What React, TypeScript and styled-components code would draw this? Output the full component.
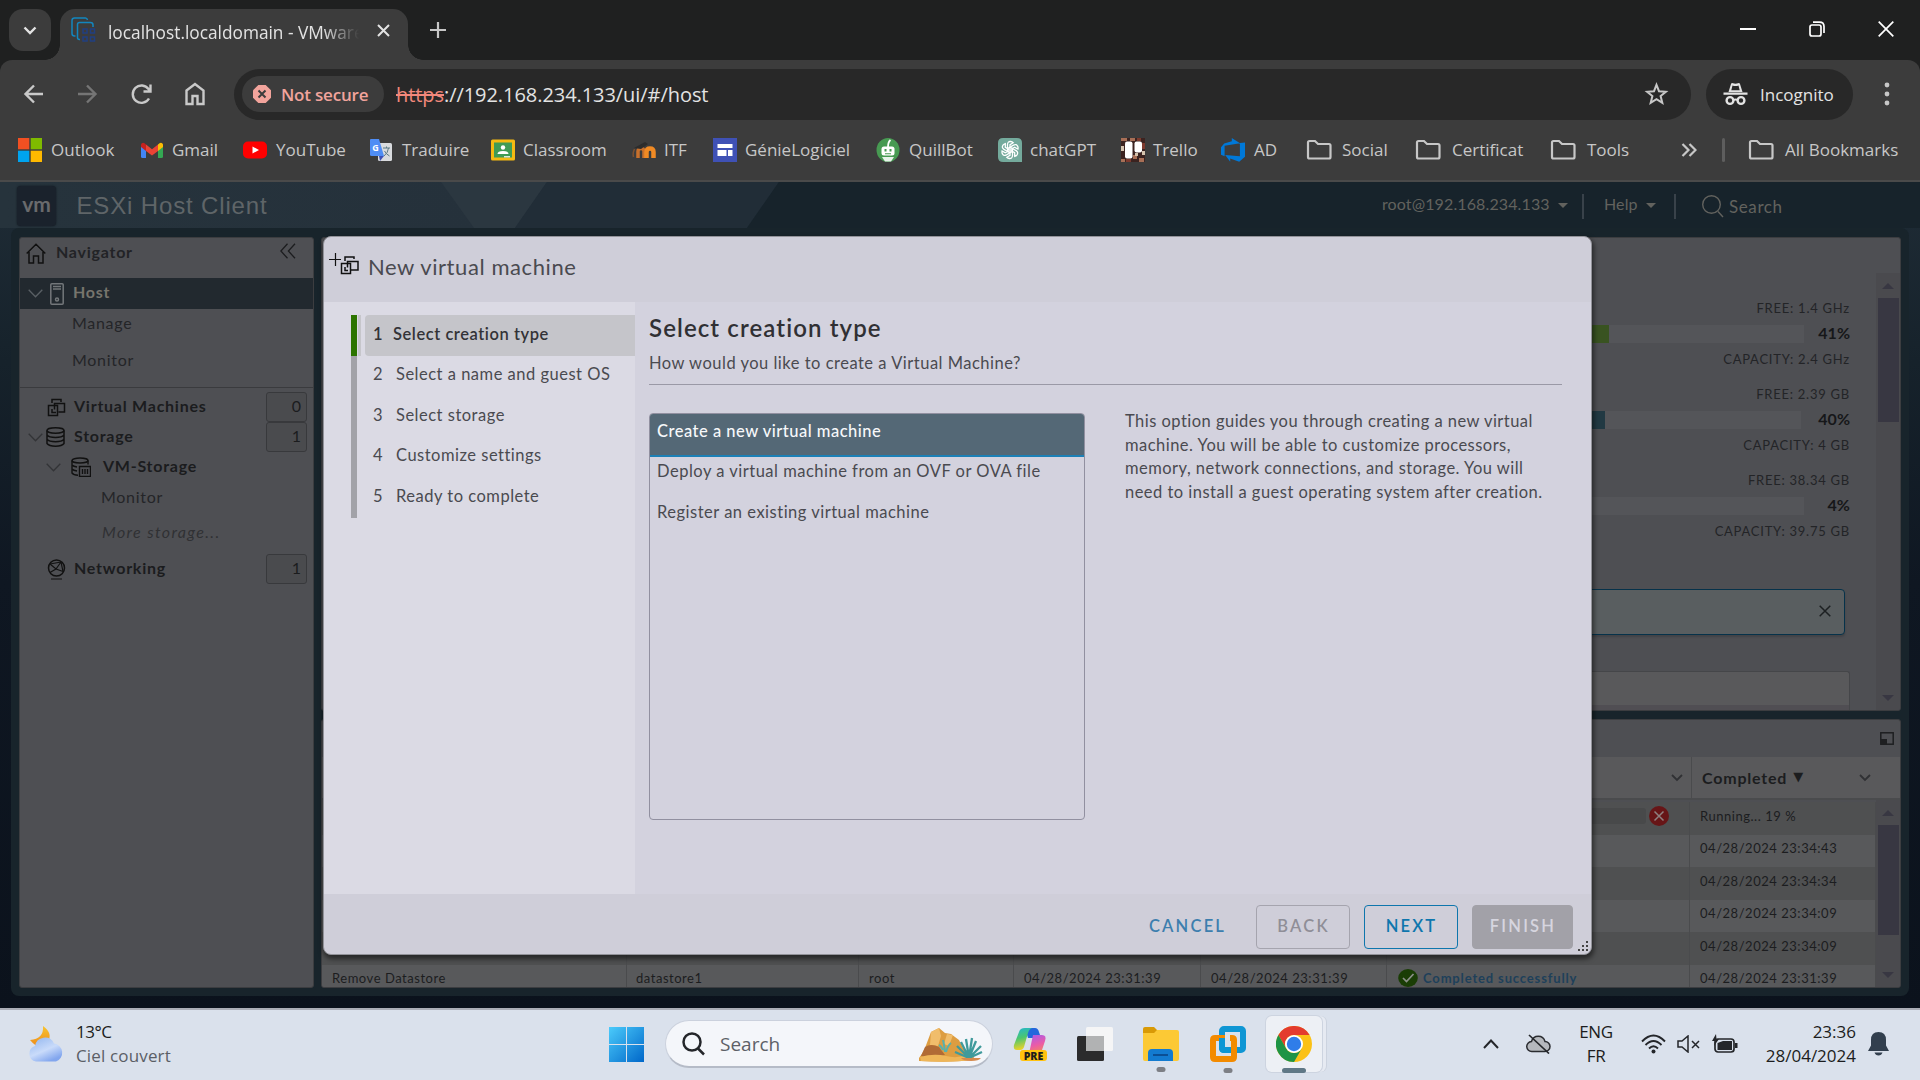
import React from 'react';
import styled, { createGlobalStyle } from 'styled-components';

const clarity = '"Lato", "Open Sans", sans-serif';
const segoe = '"Open Sans", "Noto Sans", sans-serif';

const GlobalStyle = createGlobalStyle`
  * { box-sizing: border-box; }
  html, body { margin: 0; padding: 0; background: #0b121c; overflow: hidden; }
  svg { display: block; flex: none; }
`;

const Screen = styled.div`
  position: relative;
  width: 1920px;
  height: 1080px;
  display: flex;
  flex-direction: column;
  overflow: hidden;
  white-space: nowrap;
  font-family: ${segoe};
`;

/* ---------- Browser chrome ---------- */
const TabStrip = styled.div`
  height: 60px;
  flex: none;
  display: flex;
  align-items: flex-start;
  padding: 9px 0 0 9px;
  background: #1f2020;
`;
const TabSearch = styled.div`
  width: 42px;
  height: 42px;
  border-radius: 14px;
  background: #3c3c3c;
  display: grid;
  place-items: center;
  margin-right: 9px;
`;
const Tab = styled.div`
  position: relative;
  width: 348px;
  height: 51px;
  padding: 0 14px 9px 11px;
  border-radius: 15px 15px 0 0;
  background: #3c3c3c;
  display: flex;
  align-items: center;
  color: #e3e3e3;
  font-size: 17.3px;
  &::before, &::after {
    content: '';
    position: absolute;
    bottom: 0;
    width: 15px;
    height: 15px;
  }
  &::before { left: -15px; background: radial-gradient(circle at 0 0, transparent 14.5px, #3c3c3c 15px); }
  &::after { right: -15px; background: radial-gradient(circle at 100% 0, transparent 14.5px, #3c3c3c 15px); }
`;
const TabTitle = styled.span`
  width: 252px;
  margin: 0 17px 0 11px;
  padding-top: 4px;
  overflow: hidden;
  mask-image: linear-gradient(90deg, #000 215px, transparent 251px);
`;
const NewTab = styled.div`
  margin: 13px 0 0 22px;
`;
const WindowButtons = styled.div`
  margin-left: auto;
  display: flex;
  align-items: center;
  gap: 53px;
  padding: 12px 26px 0 0;
`;

const ToolbarBack = styled.div`
  background: #1f2020;
  flex: none;
`;
const Toolbar = styled.div`
  height: 68px;
  display: flex;
  align-items: center;
  padding: 0 30px 0 21px;
  background: #3c3c3c;
  border-radius: 12px 12px 0 0;
`;
const NavIcon = styled.div<{ $w: number }>`
  width: ${(p) => p.$w}px;
`;
const Omnibox = styled.div`
  width: 1457px;
  height: 51px;
  border-radius: 26px;
  background: #282828;
  display: flex;
  align-items: center;
  padding: 0 22px 0 8px;
  color: #e3e3e3;
  font-size: 20px;
  letter-spacing: -0.06px;
`;
const Insecure = styled.div`
  width: 142px;
  height: 36px;
  border-radius: 18px;
  background: #3c3c3c;
  color: #f2a49c;
  display: flex;
  align-items: center;
  gap: 10px;
  padding: 0 0 0 11px;
  font-size: 17px;
  font-weight: 600;
  letter-spacing: -0.2px;
  margin-right: 12px;
`;
const Scheme = styled.s`
  color: #f2887c;
`;
const Url = styled.span`
  margin-right: auto;
`;
const Incognito = styled.div`
  width: 147px;
  height: 51px;
  margin-left: 15px;
  border-radius: 26px;
  background: #282828;
  display: flex;
  align-items: center;
  gap: 12px;
  padding-left: 17px;
  color: #e3e3e3;
  font-size: 17px;
`;
const Kebab = styled.div`
  margin-left: auto;
`;

const Bookmarks = styled.div`
  height: 54px;
  flex: none;
  display: flex;
  align-items: center;
  padding: 0 0 9px 18px;
  background: #3c3c3c;
  border-bottom: 2px solid #4a4a4a;
  color: #c7c7c7;
  font-size: 17px;
`;
const Bookmark = styled.div<{ $w: number; $gap?: number }>`
  width: ${(p) => p.$w}px;
  flex: none;
  display: flex;
  align-items: center;
  gap: ${(p) => p.$gap ?? 9}px;
`;
const BookmarkRule = styled.div`
  width: 3px;
  height: 24px;
  border-radius: 2px;
  background: #5e5e5e;
  margin-right: 23px;
`;

/* ---------- Host client ---------- */
const Client = styled.div`
  height: 826px;
  flex: none;
  display: flex;
  flex-direction: column;
  background: linear-gradient(#1f2c36 0, #16222b 180px, #0f1722 400px, #0b121c 826px);
  font-family: ${clarity};
`;
const Banner = styled.header`
  position: relative;
  height: 46px;
  flex: none;
  display: flex;
  align-items: center;
  padding: 2px 0 0 17px;
  background: linear-gradient(90deg, #26333c 0, #25313b 500px, #17232b 900px, #17232b);
  color: #62625e;
  font-size: 16px;
`;
const BannerArt = styled.svg`
  position: absolute;
  inset: 0;
`;
const VmLogo = styled.div`
  position: relative;
  width: 39px;
  height: 40px;
  border-radius: 4px;
  background: #1a222c;
  color: #696a6c;
  font: bold 21px/36px ${clarity};
  text-align: center;
  box-shadow: 0 0 2px #0e151c;
`;
const Product = styled.div`
  position: relative;
  margin-left: 20.500px;
  padding-bottom: 1px;
  color: #5f6568;
  font: 24px "Liberation Sans", Arial, sans-serif;
  letter-spacing: 0.85px;
  flex: 1;
`;
const BannerItem = styled.div<{ $w: number }>`
  width: ${(p) => p.$w}px;
  height: 25px;
  display: flex;
  align-items: center;
  gap: 8px;
  padding-bottom: 6px;
  letter-spacing: 0.12px;
`;
const BannerRule = styled.div<{ $gap: number }>`
  width: 2px;
  height: 25px;
  margin-right: ${(p) => p.$gap}px;
  background: #39424a;
`;
const Caret = styled.i`
  border: 5px solid transparent;
  border-top-color: #62625e;
  border-bottom: 0;
  margin-top: 4px;
`;
const SearchItem = styled.div`
  width: 218px;
  display: flex;
  align-items: center;
  gap: 5px;
  font-size: 17px;
  letter-spacing: 0.6px;
`;

const Frame = styled.div`
  width: 1898px;
  height: 768px;
  margin-left: 11px;
  padding: 9px 8px 8px;
  border-radius: 8px;
  background: #18242b;
  display: flex;
  gap: 7px;
`;
const Panel = styled.section`
  background: #4e4f53;
  border: 1px solid #3c3d40;
  border-radius: 3px;
  overflow: hidden;
`;
const Navigator = styled(Panel)`
  width: 295px;
  display: flex;
  flex-direction: column;
  color: #18191b;
  font-size: 16px;
`;
const NavHeader = styled.div`
  height: 40px;
  display: flex;
  align-items: flex-start;
  padding: 5px 17px 0 6px;
  font-weight: 700;
  color: #222326;
  letter-spacing: 0.75px;
`;
const NavTitle = styled.span`
  flex: 1;
  margin: -1px 0 0 10px;
`;
const NavRow = styled.div<{ $h: number; $pl: number; $kind?: 'host' | 'bold' | 'more' }>`
  height: ${(p) => p.$h}px;
  display: flex;
  align-items: center;
  padding: 0 6px 0 ${(p) => p.$pl}px;
  letter-spacing: ${(p) => (p.$kind === 'more' ? 1.35 : p.$kind ? 0.75 : 0.7)}px;
  font-weight: ${(p) => (p.$kind === 'host' || p.$kind === 'bold' ? 700 : 400)};
  font-style: ${(p) => (p.$kind === 'more' ? 'italic' : 'normal')};
  color: ${(p) => (p.$kind === 'host' ? '#77756d' : p.$kind === 'more' ? '#303134' : p.$kind === 'bold' ? '#1b1c1e' : '#242528')};
  background: ${(p) => (p.$kind === 'host' ? '#22292f' : 'transparent')};
`;
const NavLabel = styled.span<{ $ml?: number }>`
  flex: 1;
  margin-left: ${(p) => p.$ml ?? 0}px;
  padding-bottom: 4px;
`;
const Twisty = styled.div<{ $mr: number }>`
  margin-right: ${(p) => p.$mr}px;
`;
const NavDivider = styled.div`
  height: 1px;
  margin: 4px 0;
  background: #3a3b3e;
`;
const Count = styled.span`
  width: 41px;
  height: 30px;
  padding: 0 5px 3px 0;
  border: 1px solid #38393c;
  border-radius: 3px;
  background: #4a4b4e;
  font-weight: 400;
  line-height: 25px;
  text-align: right;
  letter-spacing: 0;
`;

const Work = styled.div`
  width: 1580px;
  display: flex;
  flex-direction: column;
  gap: 8px;
`;
const HostPanel = styled(Panel)`
  height: 474px;
  display: flex;
  justify-content: flex-end;
`;
const Stats = styled.div`
  width: 290px;
  padding: 59px 26px 0 0;
  display: flex;
  flex-direction: column;
`;
const Stat = styled.div`
  height: 86px;
  display: flex;
  flex-direction: column;
  align-items: flex-end;
  color: #232427;
  font-size: 13px;
  letter-spacing: 0.75px;
  line-height: 22px;
`;
const StatMeter = styled.div`
  width: 100%;
  height: 29px;
  display: flex;
  align-items: center;
  justify-content: flex-end;
`;
const Track = styled.div<{ $fill: number; $color: string }>`
  flex: 1;
  height: 18px;
  background: linear-gradient(90deg, ${(p) => p.$color} ${(p) => p.$fill}px, #545559 ${(p) => p.$fill}px);
`;
const Percent = styled.b<{ $w: number }>`
  width: ${(p) => p.$w}px;
  text-align: right;
  font-size: 16px;
  letter-spacing: 0;
  color: #161719;
  padding-bottom: 2px;
`;
const Notice = styled.div`
  height: 46px;
  margin: 34px 5px 0 0;
  flex: none;
  border: 1.5px solid #06324a;
  border-radius: 4px;
  background: #595e60;
  box-shadow: 0 2px 2px #424347;
  display: flex;
  align-items: center;
  justify-content: flex-end;
  padding: 0 13px 3px 0;
`;
const Card = styled.div`
  flex: 1;
  margin-top: 36px;
  border: 1px solid #454649;
  border-bottom: 0;
  border-radius: 3px 3px 0 0;
  background: linear-gradient(#59595b 33px, #504e53 33px);
`;
const Scrollbar = styled.div<{ $top: number }>`
  width: 24px;
  margin-top: ${(p) => p.$top}px;
  background: #4a4a4e;
  display: flex;
  flex-direction: column;
  align-items: center;
  padding: 10px 0 9px;
`;
const Thumb = styled.div<{ $h: number }>`
  width: 21px;
  height: ${(p) => p.$h}px;
  margin: 9px 0 auto;
  background: #383742;
`;
const Arrow = styled.i<{ $down?: boolean }>`
  border: 6px solid transparent;
  ${(p) => (p.$down ? 'border-top-color: #383742; border-bottom: 0;' : 'border-bottom-color: #383742; border-top: 0;')}
`;

const Tasks = styled(Panel)`
  height: 269px;
  display: flex;
  flex-direction: column;
  color: #1c1d1f;
`;
const TasksBar = styled.div`
  height: 37px;
  flex: none;
  display: flex;
  justify-content: flex-end;
  align-items: center;
  padding: 0 6px 1px 0;
`;
const TasksHead = styled.div`
  height: 43px;
  flex: none;
  display: flex;
  justify-content: flex-end;
  align-items: center;
  background: #59595b;
  border-bottom: 2px solid #4a4b4d;
  font-size: 16px;
  font-weight: 700;
  letter-spacing: 0.8px;
`;
const SortHead = styled.div`
  width: 209px;
  height: 41px;
  margin-left: 8px;
  padding: 0 29px 0 10px;
  border-left: 1px solid #4a4b4d;
  display: flex;
  align-items: center;
`;
const SortMark = styled.span`
  font: 13px "DejaVu Sans", sans-serif;
  margin: 0 auto 2px 6px;
`;
const TasksBody = styled.div`
  flex: 1;
  min-height: 0;
  display: flex;
`;
const TaskRows = styled.div`
  width: 1554px;
  padding-top: 2px;
`;
const TaskRow = styled.div<{ $odd?: boolean }>`
  height: 32.5px;
  display: grid;
  grid-template-columns: 305px 232px 155px 187px 186px 303px 186px;
  background: ${(p) => (p.$odd ? '#4f5051' : '#58595b')};
  font-size: 13px;
  letter-spacing: 0.53px;
`;
const Cell = styled.div<{ $pad?: number }>`
  border-right: 1px solid #4a4b4d;
  display: flex;
  align-items: center;
  padding: 0 0 5px ${(p) => p.$pad ?? 10}px;
`;
const RunningCell = styled(Cell)`
  justify-content: flex-end;
  padding-right: 20px;
  padding-bottom: 4px;
`;
const RunTrack = styled.div`
  width: 240px;
  height: 16px;
  margin-right: 3px;
  border-radius: 3px;
  background: #48494a;
`;
const Success = styled.b`
  margin-left: 5px;
  letter-spacing: 0.85px;
  color: #1e405a;
`;

/* ---------- Dialog ---------- */
const Dialog = styled.div`
  position: absolute;
  left: 323px;
  top: 236px;
  width: 1269px;
  height: 719px;
  border: 1px solid #929299;
  border-radius: 8px;
  background: #cfced9;
  box-shadow: 1px 3px 5px 1px rgba(0, 0, 0, 0.5);
  overflow: hidden;
  display: flex;
  flex-direction: column;
  font-family: ${clarity};
  color: #4a4a50;
  font-size: 16.5px;
  letter-spacing: 0.5px;
`;
const DialogHead = styled.div`
  height: 65px;
  flex: none;
  display: flex;
  align-items: flex-start;
  padding: 15px 0 0 5px;
  font-size: 22px;
  letter-spacing: 0.58px;
`;
const DialogTitle = styled.span`
  margin: 1px 0 0 8px;
`;
const DialogBody = styled.div`
  height: 592px;
  flex: none;
  display: flex;
  background: #d3d2de;
`;
const Steps = styled.div`
  width: 311px;
  padding: 13px 0 0 27px;
  background: #dbdae4;
`;
const Step = styled.div<{ $active?: boolean }>`
  height: 40.5px;
  display: flex;
  border-left: 6px solid ${(p) => (p.$active ? '#2c7400' : '#a2a2a8')};
  ${(p) => p.$active && 'font-weight: 600; letter-spacing: 0.55px; color: #333337;'}
`;
const StepSliver = styled.div`
  width: 3px;
  margin-left: 1px;
  background: #c6c6cb;
`;
const StepLabel = styled.div<{ $active?: boolean }>`
  flex: 1;
  margin-left: ${(p) => (p.$active ? 4 : 8)}px;
  padding: 0 0 3px 8px;
  display: flex;
  align-items: center;
  border-radius: 4px 0 0 4px;
  background: ${(p) => (p.$active ? '#c5c5ca' : 'transparent')};
`;
const StepNo = styled.span<{ $active?: boolean }>`
  width: ${(p) => (p.$active ? 20 : 23)}px;
`;
const Page = styled.div`
  flex: 1;
  padding: 12px 29px 0 14px;
`;
const PageTitle = styled.h2`
  margin: 0;
  height: 30px;
  font-size: 24px;
  line-height: 28px;
  font-weight: 600;
  letter-spacing: 1.1px;
  color: #303034;
`;
const PageHint = styled.div`
  height: 41px;
  border-bottom: 1px solid #9a99a6;
  line-height: 39px;
`;
const Choice = styled.div`
  display: flex;
  margin-top: 28px;
`;
const Options = styled.div`
  width: 436px;
  height: 407px;
  border: 1px solid #9190a0;
  border-radius: 4px;
  overflow: hidden;
`;
const Option = styled.div<{ $selected?: boolean }>`
  height: ${(p) => (p.$selected ? 43 : 41)}px;
  padding-left: 7px;
  line-height: ${(p) => (p.$selected ? 34 : 28)}px;
  ${(p) =>
    p.$selected &&
    'background: #546876; color: #f7f8fa; font-weight: 500; letter-spacing: 0.5px; border-bottom: 2px solid #1c80b6;'}
`;
const Explain = styled.p`
  margin: -3px 0 0 40px;
  line-height: 23.5px;
  letter-spacing: 0.47px;
`;
const DialogFoot = styled.div`
  flex: 1;
  position: relative;
  display: flex;
  justify-content: flex-end;
  align-items: flex-start;
  padding: 11px 18px 0 0;
  gap: 14px;
`;
const Button = styled.button<{ $w: number; $kind: 'link' | 'muted' | 'outline' | 'solid' }>`
  width: ${(p) => p.$w}px;
  height: 44px;
  padding: 0 0 3px 1px;
  border-radius: 4px;
  font: 600 16.5px ${clarity};
  letter-spacing: 2.2px;
  border: 1px solid ${(p) => ({ link: 'transparent', muted: '#a5a4ae', outline: '#0e76ad', solid: '#a2a1a8' })[p.$kind]};
  color: ${(p) => ({ link: '#3d7eae', muted: '#8f8e97', outline: '#0e76ad', solid: '#d6d5df' })[p.$kind]};
  background: ${(p) => (p.$kind === 'solid' ? '#a2a1a8' : 'transparent')};
`;
const Grip = styled.svg`
  position: absolute;
  right: 3px;
  bottom: 3px;
`;

/* ---------- Taskbar ---------- */
const Taskbar = styled.footer`
  height: 72px;
  flex: none;
  display: flex;
  align-items: center;
  border-top: 2px solid #abaeb7;
  background: #dae1ec;
  color: #1c1d20;
  font-size: 17px;
  padding: 0 31px 2px 27px;
`;
const TwoLine = styled.div<{ $align?: string; $w: number; $ml: number }>`
  width: ${(p) => p.$w}px;
  margin-left: ${(p) => p.$ml}px;
  text-align: ${(p) => p.$align ?? 'left'};
  line-height: 24px;
  letter-spacing: ${(p) => (p.$align === 'right' ? 0 : -0.45)}px;
`;
const Muted = styled.div`
  color: #5a5e66;
  letter-spacing: 0.15px;
`;
const SearchBox = styled.div`
  width: 328px;
  height: 48px;
  margin-left: 21px;
  padding: 0 9px 0 16px;
  border: 1px solid #cbd1dd;
  border-bottom: 2px solid #b5bbc7;
  border-radius: 24px;
  background: #f4f6fa;
  display: flex;
  align-items: center;
  gap: 15px;
  color: #5d6067;
  font-size: 19px;
`;
const Grow = styled.span`
  flex: 1;
`;
const AppSlot = styled.div<{ $ml: number; $active?: boolean }>`
  position: relative;
  margin-left: ${(p) => p.$ml}px;
  ${(p) =>
    p.$active &&
    'padding: 10px; border-radius: 6px; background: #edf0f5; box-shadow: 0 0 0 1px #cdd4e0, 4px 0 0 0 #e6eaf2, 5px 0 0 0 #ccd3df;'}
`;
const RunMark = styled.i<{ $active?: boolean }>`
  position: absolute;
  left: 50%;
  bottom: ${(p) => (p.$active ? -1 : -11)}px;
  width: ${(p) => (p.$active ? 24 : 9)}px;
  height: 5px;
  transform: translateX(-50%);
  border-radius: 3px;
  background: ${(p) => (p.$active ? '#607886' : '#7d7f85')};
`;
const TrayItem = styled.div<{ $ml: number }>`
  margin-left: ${(p) => p.$ml}px;
`;

/* ---------- Icons ---------- */
const Folder = () => (
  <svg width="26" height="24" viewBox="0 0 26 24" fill="none" stroke="#c7c7c7" strokeWidth="2.2">
    <path d="M2 4.500Q2 3 3.500 3H9l3 3h11q1.500 0 1.500 1.500V19q0 1.500-1.500 1.500H3.500Q2 20.500 2 19Z" />
  </svg>
);
const VmIcon = ({ s = 19, c = '#111' }) => (
  <svg width={s} height={s} viewBox="0 0 19 19" fill="none" stroke={c} strokeWidth="1.5">
    <path d="M5 5V1.500h9V4M1.500 7.500h9V17.500h-9ZM7.500 11.500V5.500h10V14h-6M5 11v3.500h4" />
  </svg>
);
const ChevDown = ({ w = 15, c = '#333437', sw = 1.3 }) => (
  <svg width={w} height="9" viewBox="0 0 15 9" fill="none" stroke={c} strokeWidth={sw}>
    <path d="m.7.8 6.800 7 6.800-7" />
  </svg>
);
const HeadChevron = () => (
  <svg width="12" height="8" viewBox="0 0 12 8" fill="none" stroke="#303134" strokeWidth="1.800">
    <path d="m1 1 5 5 5-5" />
  </svg>
);

const OutlookIcon = () => (
  <svg width="24" height="24" viewBox="0 0 24 24">
    <path fill="#f25022" d="M0 0h11.300v11.300H0z" />
    <path fill="#7fba00" d="M12.700 0H24v11.300H12.700z" />
    <path fill="#00a4ef" d="M0 12.700h11.300V24H0z" />
    <path fill="#ffb900" d="M12.700 12.700H24V24H12.700z" />
  </svg>
);
const GmailIcon = () => (
  <svg width="24" height="24" viewBox="0 0 24 24">
    <path fill="#4285f4" d="M1 7v11.500A1.500 1.500 0 0 0 2.500 20H6V9.500Z" />
    <path fill="#34a853" d="M23 7v11.500a1.500 1.500 0 0 1-1.500 1.500H18V9.500Z" />
    <path fill="#fbbc04" d="m18 6.500 1.500-1.300C21 4 23 5 23 7v2l-5 4Z" />
    <path fill="#c5221f" d="M1 7c0-2 2-3 3.500-1.800L6 6.500V13L1 9Z" />
    <path fill="#ea4335" d="m6 6.500 6 4.700 6-4.700V13l-6 4.500L6 13Z" />
  </svg>
);
const YouTubeIcon = () => (
  <svg width="24" height="24" viewBox="0 0 24 24">
    <rect x="0" y="3.500" width="24" height="17" rx="5" fill="#f00" />
    <path fill="#fff" d="m9.500 8.500 6.500 3.500-6.500 3.500z" />
  </svg>
);
const TranslateIcon = () => (
  <svg width="24" height="24" viewBox="0 0 24 24">
    <rect x="9" y="5" width="14" height="18" rx="1.500" fill="#d9dbde" />
    <path fill="#3f51b5" d="m10 18 5 0-4 5z" />
    <path fill="#4f8df5" d="M1.500 1H10l5 17H2.500Q1 18 1 16.500V2z" />
    <text x="3.300" y="13" fontSize="9" fontWeight="700" fill="#fff" fontFamily="Open Sans">G</text>
    <path d="M14 10h7M17.500 8.500V10M15 18q4-3 4.500-8M15.500 13q1.500 3 5 5" stroke="#5d7a85" fill="none" />
  </svg>
);
const ClassroomIcon = () => (
  <svg width="24" height="24" viewBox="0 0 24 24">
    <rect x="0" y="1.500" width="24" height="21" rx="1.500" fill="#f4b912" />
    <rect x="3" y="4.500" width="18" height="15" fill="#3f9b55" />
    <circle cx="12" cy="9.500" r="2.200" fill="#fff" />
    <path fill="#fff" d="M6.500 16q0-3 5.500-3t5.500 3z" />
    <path fill="#d9ead9" d="M13 18h6v1.500h-6z" />
  </svg>
);
const MoodleIcon = () => (
  <svg width="24" height="24" viewBox="0 0 24 24" fill="none">
    <path d="M6 20v-6.500q0-3 3-3t3 3V20" stroke="#c8702c" strokeWidth="3.500" />
    <path d="M14.500 20v-6q0-3.500 3.500-3.500t3.500 3.500V20" stroke="#f08a24" strokeWidth="4.500" />
    <path d="m2 10 11-6 3 2-7 5z" fill="#2c2c2c" />
    <path d="M2.500 11q-2 4-1 8" stroke="#7d5030" strokeWidth="1.500" />
  </svg>
);
const SitesIcon = () => (
  <svg width="24" height="24" viewBox="0 0 24 24">
    <path fill="#3f51b5" d="M0 0h24v24H0z" />
    <path fill="#fff" d="M4.500 6h15v4h-15zM4.500 12h9v6h-9zM15 12h4.500v6H15z" />
  </svg>
);
const QuillIcon = () => (
  <svg width="24" height="24" viewBox="0 0 24 24">
    <ellipse cx="12" cy="12" rx="11.500" ry="12" fill="#479a52" />
    <path d="M12 9q0-5 2.500-7" stroke="#fff" strokeWidth="1.800" fill="none" />
    <rect x="5.500" y="8.500" width="13" height="9" rx="2.500" fill="#fff" />
    <path fill="#479a52" d="M8.500 11h2v2.500h-2zM13.500 11h2v2.500h-2zM9 15.200h6v1H9z" />
    <path fill="#e8f3ea" d="M6 19h12l-3 4.500H9z" />
  </svg>
);
const GptIcon = () => (
  <svg width="24" height="24" viewBox="0 0 24 24">
    <path fill="#74aa9c" d="M5 0h14q5 0 5 5v19H5q-5 0-5-5V5q0-5 5-5Z" />
    <g fill="none" stroke="#fff" strokeWidth="1.300">
      {[0, 60, 120, 180, 240, 300].map((a) => (
        <path key={a} transform={`rotate(${a} 12 12)`} d="M12 9.200 9.500 10.600V6.500Q9.700 3.300 12.700 3.500q1.500.2 2.500 1.200L12 6.600v5" />
      ))}
    </g>
  </svg>
);
const TrelloIcon = () => (
  <svg width="24" height="24" viewBox="0 0 24 24">
    <path fill="#3b2320" d="M0 0h24v24H0z" />
    <path fill="#a86f56" d="M0 0h6v3H0zM9 0h5v3H9zM18 20h5v4h-5zM0 21h4v3H0zM12 17h4v4h-4z" />
    <path fill="#7d3a2e" d="M20 5h4v6h-4zM5 21h5v3H5zM16 0h4v3h-4z" />
    <path fill="#d5c3ae" d="M0 8h3v5H0zM14 15h3v3h-3zM21 13h3v4h-3z" />
    <rect x="4" y="3.500" width="7.500" height="17" rx="2" fill="#fff" />
    <rect x="13.500" y="3.500" width="7.500" height="11" rx="2" fill="#fff" />
  </svg>
);
const AzureIcon = () => (
  <svg width="24" height="24" viewBox="0 0 24 24">
    <path fill="#0078d7" d="M24 4.500v14.200l-5.800 5-9-3.200v3.200L4.200 17l14.700 1.200V5.100ZM19 5.200 10.800 0v3.300L3.200 5.600 0 9.300v7.400l3.600 1.500V7.800Z" />
  </svg>
);

const ChromeIcon = () => (
  <svg width="36" height="36" viewBox="0 0 36 36">
    <circle cx="18" cy="18" r="18" fill="#fbc116" />
    <path fill="#e33b2e" d="M2.400 9A18 18 0 0 1 33.600 9H18a9 9 0 0 0-7.800 13.500Z" />
    <path fill="#1e9446" d="M2.400 9A18 18 0 0 0 18 36l7.800-13.500a9 9 0 0 1-15.600 0Z" />
    <circle cx="18" cy="18" r="9" fill="#fff" />
    <circle cx="18" cy="18" r="7.200" fill="#2f7de9" />
  </svg>
);

const navIcon = { fill: 'none', stroke: '#c9c9c9', strokeWidth: 2.4 } as const;

const bookmarks: [string, React.ReactNode, number, number?][] = [
  ['Outlook', <OutlookIcon />, 122],
  ['Gmail', <GmailIcon />, 103, 8],
  ['YouTube', <YouTubeIcon />, 126],
  ['Traduire', <TranslateIcon />, 122, 9],
  ['Classroom', <ClassroomIcon />, 141, 8],
  ['ITF', <MoodleIcon />, 81, 8],
  ['GénieLogiciel', <SitesIcon />, 163, 8],
  ['QuillBot', <QuillIcon />, 122],
  ['chatGPT', <GptIcon />, 123, 8],
  ['Trello', <TrelloIcon />, 100, 8],
  ['AD', <AzureIcon />, 85],
  ['Social', <Folder />, 109, 10],
  ['Certificat', <Folder />, 135, 11],
  ['Tools', <Folder />, 131, 11],
];

const steps = ['Select creation type', 'Select a name and guest OS', 'Select storage', 'Customize settings', 'Ready to complete'];

const stats = [
  { free: '1.4 GHz', pct: '41%', cap: '2.4 GHz', fill: 23, color: '#395321', w: 46 },
  { free: '2.39 GB', pct: '40%', cap: '4 GB', fill: 19, color: '#213943', w: 49 },
  { free: '38.34 GB', pct: '4%', cap: '39.75 GB', fill: 0, color: '#545559', w: 46 },
];

const completed = ['04/28/2024 23:34:43', '04/28/2024 23:34:34', '04/28/2024 23:34:09', '04/28/2024 23:34:09'];

function BrowserChrome() {
  return (
    <>
      <TabStrip>
        <TabSearch>
          <svg width="14" height="9" viewBox="0 0 14 9" fill="none" stroke="#e3e3e3" strokeWidth="2.400">
            <path d="m1.500 1.500 5.500 5.500 5.500-5.500" />
          </svg>
        </TabSearch>
        <Tab>
          <svg width="26" height="26" viewBox="0 0 26 26" fill="none">
            <path d="M4.500 19H3.500Q1 19 1 16.500V3.500Q1 1 3.500 1h11Q16 1 16.500 3" stroke="#1286bf" strokeWidth="1.500" />
            <path d="M9 22.500H8.500Q6.500 22.500 6.500 20.500V7.500Q6.500 5.500 8.500 5.500h11Q22 5.500 22 8v2" stroke="#1286bf" strokeWidth="1.500" />
            <path d="M12 12h4v4h-4zM19.500 12h4v4h-4zM12 20h4v4h-4zM19.500 20h4v4h-4z" stroke="#203f80" strokeWidth="1.500" />
          </svg>
          <TabTitle>localhost.localdomain - VMware</TabTitle>
          <svg width="13" height="13" viewBox="0 0 13 13" stroke="#e3e3e3" strokeWidth="2">
            <path d="m1 1 11 11M12 1 1 12" />
          </svg>
        </Tab>
        <NewTab>
          <svg width="16" height="16" viewBox="0 0 16 16" stroke="#c7c7c7" strokeWidth="2.200">
            <path d="M8 0v16M0 8h16" />
          </svg>
        </NewTab>
        <WindowButtons>
          <svg width="16" height="16" viewBox="0 0 16 16" stroke="#fff" strokeWidth="2"><path d="M0 8h16" /></svg>
          <svg width="16" height="16" viewBox="0 0 16 16" stroke="#fff" strokeWidth="1.700" fill="none">
            <rect x="1" y="4" width="11" height="11" rx="2" />
            <path d="M4 1.200h6.500Q15 1.200 15 5.500V12" />
          </svg>
          <svg width="16" height="16" viewBox="0 0 16 16" stroke="#fff" strokeWidth="1.700"><path d="m.7.700 14.600 14.600M15.300.7.700 15.300" /></svg>
        </WindowButtons>
      </TabStrip>
      <ToolbarBack>
        <Toolbar>
          <NavIcon $w={55}>
            <svg width="24" height="20" viewBox="0 0 24 20" {...navIcon}><path d="M22 10H5M13 1.500 4.500 10l8.500 8.500" /></svg>
          </NavIcon>
          <NavIcon $w={54}>
            <svg width="24" height="20" viewBox="0 0 24 20" {...navIcon} stroke="#757575"><path d="M2 10h17M11 1.500l8.500 8.500-8.500 8.500" /></svg>
          </NavIcon>
          <NavIcon $w={55}>
            <svg width="24" height="22" viewBox="0 0 24 22" {...navIcon}><path d="M19 15.500A8.700 8.700 0 1 1 18.500 6L21 8.500M20.500 1.500V8.500H13.500" /></svg>
          </NavIcon>
          <NavIcon $w={49}>
            <svg width="20" height="24" viewBox="0 0 20 24" {...navIcon}><path d="M1.500 8.500 10 2l8.500 6.500V22H12.500V14h-5v8H1.500Z" /></svg>
          </NavIcon>
          <Omnibox>
            <Insecure>
              <svg width="18" height="18" viewBox="0 0 18 18">
                <path fill="#f2a49c" d="M5.300 0h7.400L18 5.300v7.400L12.700 18H5.300L0 12.700V5.300Z" />
                <path stroke="#3c3c3c" strokeWidth="2" d="m5.500 5.500 7 7M12.500 5.500l-7 7" />
              </svg>
              Not secure
            </Insecure>
            <Url><Scheme>https</Scheme>://192.168.234.133/ui/#/host</Url>
            <svg width="25" height="24" viewBox="0 0 24 24" fill="none" stroke="#c7c7c7" strokeWidth="2">
              <path d="m12 2.800 2.500 6.400 6.900.5-5.300 4.400 1.700 6.700L12 17.100l-5.800 3.700 1.700-6.700-5.300-4.400 6.900-.5Z" />
            </svg>
          </Omnibox>
          <Incognito>
            <svg width="25" height="24" viewBox="0 0 24 24" fill="#e3e3e3">
              <path fillRule="evenodd" d="M7.500 2q.5-1.500 2-.8 2.500.9 5 0 1.500-.7 2 .8L19 10H5ZM9 3.500 7.800 8.200h8.400L15 3.500q-3 1-6 0ZM0 10.500h24v2.300H0z" />
              <circle cx="6.500" cy="18.500" r="3.400" fill="none" stroke="#e3e3e3" strokeWidth="2.400" />
              <circle cx="17.500" cy="18.500" r="3.400" fill="none" stroke="#e3e3e3" strokeWidth="2.400" />
              <path d="M9.500 17.200q2.500-1.200 5 0v2q-2.500-1.200-5 0z" />
            </svg>
            Incognito
          </Incognito>
          <Kebab>
            <svg width="6" height="26" viewBox="0 0 6 26" fill="#c7c7c7">
              <circle cx="3" cy="4" r="2.400" /><circle cx="3" cy="13" r="2.400" /><circle cx="3" cy="22" r="2.400" />
            </svg>
          </Kebab>
        </Toolbar>
      </ToolbarBack>
      <Bookmarks>
        {bookmarks.map(([name, icon, w, gap]) => (
          <Bookmark key={name} $w={w} $gap={gap}>{icon}{name}</Bookmark>
        ))}
        <Bookmark $w={41}>
          <svg width="16" height="14" viewBox="0 0 16 14" fill="none" stroke="#c7c7c7" strokeWidth="2.200"><path d="m1.500 1 6 6-6 6M8.500 1l6 6-6 6" /></svg>
        </Bookmark>
        <BookmarkRule />
        <Bookmark $w={150} $gap={11}><Folder />All Bookmarks</Bookmark>
      </Bookmarks>
    </>
  );
}

function NavigatorPanel() {
  return (
    <Navigator>
      <NavHeader>
        <svg width="20" height="21" viewBox="0 0 20 21" fill="none" stroke="#111" strokeWidth="1.500">
          <path d="M.7 10.500 10 1.200l9.300 9.300M3 9v11h4.500v-7h5v7H17V9" />
        </svg>
        <NavTitle>Navigator</NavTitle>
        <svg width="16" height="16" viewBox="0 0 16 16" fill="none" stroke="#1c1d1f" strokeWidth="1.300">
          <path d="M7.500.7.900 8l6.600 7.300M15 .7 8.400 8l6.600 7.300" />
        </svg>
      </NavHeader>
      <NavRow $h={31} $pl={8} $kind="host">
        <Twisty $mr={7}><ChevDown c="#5a6065" /></Twisty>
        <svg width="14" height="22" viewBox="0 0 14 22" fill="none" stroke="#73777a" strokeWidth="1.500">
          <rect x=".8" y=".8" width="12.400" height="20.400" rx="1" />
          <path d="M3 3.500h8M3 6h8" />
          <circle cx="7" cy="16.500" r="1.500" />
        </svg>
        <NavLabel $ml={9}>Host</NavLabel>
      </NavRow>
      <NavRow $h={31} $pl={52}><NavLabel>Manage</NavLabel></NavRow>
      <NavRow $h={43} $pl={52}><NavLabel>Monitor</NavLabel></NavRow>
      <NavDivider />
      <NavRow $h={30} $pl={27} $kind="bold">
        <VmIcon />
        <NavLabel $ml={8}>Virtual Machines</NavLabel>
        <Count>0</Count>
      </NavRow>
      <NavRow $h={30} $pl={8} $kind="bold">
        <Twisty $mr={3}><ChevDown /></Twisty>
        <svg width="19" height="20" viewBox="0 0 19 20" fill="none" stroke="#111" strokeWidth="1.500">
          <ellipse cx="9.500" cy="3.500" rx="8.500" ry="2.700" />
          <path d="M1 3.500v13q2 2.700 8.500 2.700t8.500-2.700v-13M1 8q2 2.500 8.500 2.500T18 8M1 12.300q2 2.500 8.500 2.500t8.500-2.500" />
        </svg>
        <NavLabel $ml={9}>Storage</NavLabel>
        <Count>1</Count>
      </NavRow>
      <NavRow $h={30} $pl={26} $kind="bold">
        <Twisty $mr={10}><ChevDown /></Twisty>
        <svg width="20" height="20" viewBox="0 0 20 20" fill="none" stroke="#111" strokeWidth="1.400">
          <ellipse cx="9" cy="3.500" rx="8" ry="2.500" />
          <path d="M1 3.500v12.500q1.500 2 6 2.300M17 3.500v4M1 8q1.500 1.500 5 2M1 12q1.500 1.500 5 2M8.500 9.500h11v10h-11zM11.500 12v5M14 12v5M16.500 12v5" />
        </svg>
        <NavLabel $ml={12}>VM-Storage</NavLabel>
      </NavRow>
      <NavRow $h={32} $pl={81}><NavLabel>Monitor</NavLabel></NavRow>
      <NavRow $h={38} $pl={82} $kind="more"><NavLabel>More storage...</NavLabel></NavRow>
      <NavRow $h={34} $pl={27} $kind="bold">
        <svg width="19" height="21" viewBox="0 0 19 21" fill="none" stroke="#111" strokeWidth="1.500">
          <circle cx="9.500" cy="9" r="8" />
          <path d="m3 5 6 5 5-7M9 10l-6 3.500M9 10l7 2.500M3 5l11-2M14 3l2 9.500M4 20h11" strokeWidth="1.200" />
        </svg>
        <NavLabel $ml={8}>Networking</NavLabel>
        <Count>1</Count>
      </NavRow>
    </Navigator>
  );
}

function TasksPanel() {
  return (
    <Tasks>
      <TasksBar>
        <svg width="14" height="13" viewBox="0 0 14 13"><rect x=".8" y=".8" width="12.400" height="11.400" fill="none" stroke="#1e1f21" strokeWidth="1.500" /><path fill="#1e1f21" d="M1 7h6v6H1z" /></svg>
      </TasksBar>
      <TasksHead>
        <HeadChevron />
        <SortHead>
          Completed<SortMark>▼</SortMark>
          <HeadChevron />
        </SortHead>
      </TasksHead>
      <TasksBody>
        <TaskRows>
          <TaskRow $odd>
            <Cell /><Cell /><Cell /><Cell /><Cell />
            <RunningCell>
              <RunTrack />
              <svg width="20" height="20" viewBox="0 0 20 20"><circle cx="10" cy="10" r="10" fill="#671517" /><path d="m5.500 5.500 9 9M14.500 5.500l-9 9" stroke="#8e8080" strokeWidth="1.500" /></svg>
            </RunningCell>
            <Cell>Running... 19 %</Cell>
          </TaskRow>
          {completed.map((when, i) => (
            <TaskRow key={i} $odd={i % 2 === 1}>
              <Cell /><Cell /><Cell /><Cell /><Cell /><Cell />
              <Cell>{when}</Cell>
            </TaskRow>
          ))}
          <TaskRow>
            <Cell>Remove Datastore</Cell>
            <Cell $pad={9}>datastore1</Cell>
            <Cell>root</Cell>
            <Cell>04/28/2024 23:31:39</Cell>
            <Cell>04/28/2024 23:31:39</Cell>
            <Cell $pad={11}>
              <svg width="20" height="18" viewBox="0 0 20 18"><ellipse cx="10" cy="9" rx="9.800" ry="9" fill="#1a3d05" /><path d="m5 9 3.500 3.500L15.500 5" fill="none" stroke="#8c9089" strokeWidth="1.700" /></svg>
              <Success>Completed successfully</Success>
            </Cell>
            <Cell>04/28/2024 23:31:39</Cell>
          </TaskRow>
        </TaskRows>
        <Scrollbar $top={0}>
          <Arrow />
          <Thumb $h={110} />
          <Arrow $down />
        </Scrollbar>
      </TasksBody>
    </Tasks>
  );
}

function HostClient() {
  return (
    <Client>
      <Banner>
        <BannerArt width="900" height="46" viewBox="0 0 900 46">
          <path d="M441 0H547L515 46H474Z" fill="#2b3740" />
          <path d="M547 0H779L747 46H515Z" fill="#212d37" />
          <path d="M779 0H900V46H747Z" fill="#17232b" />
        </BannerArt>
        <VmLogo>vm</VmLogo>
        <Product>ESXi Host Client</Product>
        <BannerItem $w={200}>root@192.168.234.133<Caret /></BannerItem>
        <BannerRule $gap={20} />
        <BannerItem $w={70}>Help<Caret /></BannerItem>
        <BannerRule $gap={26} />
        <SearchItem>
          <svg width="22" height="23" viewBox="0 0 22 23" fill="none" stroke="#62625e" strokeWidth="1.400"><circle cx="9.500" cy="9.500" r="8.800" /><path d="m16 16.500 5 5.500" /></svg>
          Search
        </SearchItem>
      </Banner>
      <Frame>
        <NavigatorPanel />
        <Work>
          <HostPanel>
            <Stats>
              {stats.map((s) => (
                <Stat key={s.pct}>
                  <span>FREE: {s.free}</span>
                  <StatMeter>
                    <Track $fill={s.fill} $color={s.color} />
                    <Percent $w={s.w}>{s.pct}</Percent>
                  </StatMeter>
                  <span>CAPACITY: {s.cap}</span>
                </Stat>
              ))}
              <Notice>
                <svg width="12" height="12" viewBox="0 0 12 12" stroke="#1d2022" strokeWidth="1.500"><path d="m.7.700 10.600 10.600M11.300.7.700 11.300" /></svg>
              </Notice>
              <Card />
            </Stats>
            <Scrollbar $top={35}>
              <Arrow />
              <Thumb $h={124} />
              <Arrow $down />
            </Scrollbar>
          </HostPanel>
          <TasksPanel />
        </Work>
      </Frame>
    </Client>
  );
}

function NewVmDialog() {
  return (
    <Dialog>
      <DialogHead>
        <svg width="31" height="24" viewBox="0 0 31 24" fill="none" stroke="#111" strokeWidth="1.500">
          <path d="M6.500 1v13M0 7.500h12" strokeWidth="1.200" />
          <path d="M16 9V5h9v2M12.500 11.500h9v10h-9ZM18.500 15.500V9.500H29V18h-7M16 15v3.500h3" />
        </svg>
        <DialogTitle>New virtual machine</DialogTitle>
      </DialogHead>
      <DialogBody>
        <Steps>
          {steps.map((s, i) => (
            <Step key={s} $active={i === 0}>
              {i === 0 && <StepSliver />}
              <StepLabel $active={i === 0}><StepNo $active={i === 0}>{i + 1}</StepNo>{s}</StepLabel>
            </Step>
          ))}
        </Steps>
        <Page>
          <PageTitle>Select creation type</PageTitle>
          <PageHint>How would you like to create a Virtual Machine?</PageHint>
          <Choice>
            <Options>
              <Option $selected>Create a new virtual machine</Option>
              <Option>Deploy a virtual machine from an OVF or OVA file</Option>
              <Option>Register an existing virtual machine</Option>
            </Options>
            <Explain>
              This option guides you through creating a new virtual<br />
              machine. You will be able to customize processors,<br />
              memory, network connections, and storage. You will<br />
              need to install a guest operating system after creation.
            </Explain>
          </Choice>
        </Page>
      </DialogBody>
      <DialogFoot>
        <Button $w={110} $kind="link">CANCEL</Button>
        <Button $w={94} $kind="muted">BACK</Button>
        <Button $w={94} $kind="outline">NEXT</Button>
        <Button $w={101} $kind="solid">FINISH</Button>
        <Grip width="10" height="10" viewBox="0 0 10 10" fill="#444">
          <path d="M8 0h2v2H8zM4 4h2v2H4zM8 4h2v2H8zM0 8h2v2H0zM4 8h2v2H4zM8 8h2v2H8z" />
        </Grip>
      </DialogFoot>
    </Dialog>
  );
}

function WindowsTaskbar() {
  return (
    <Taskbar>
      <svg width="38" height="36" viewBox="0 0 38 36">
        <defs>
          <linearGradient id="moon" x1="0" y1="0" x2="0" y2="1"><stop stopColor="#f7c430" /><stop offset="1" stopColor="#ee8a18" /></linearGradient>
          <linearGradient id="cloud" x1="0" y1="0" x2=".6" y2="1"><stop stopColor="#8fb4ee" /><stop offset=".6" stopColor="#c9dbfa" /><stop offset="1" stopColor="#82a6ee" /></linearGradient>
        </defs>
        <path fill="url(#moon)" d="M16 0Q27 8 20 17T3 14q14-1 13-14Z" />
        <path fill="url(#cloud)" d="M9 35.500a8 8 0 0 1-1-15.500A10 10 0 0 1 27 17.500 9.300 9.300 0 0 1 29 35.500Z" />
      </svg>
      <TwoLine $w={401} $ml={11}>13°C<Muted>Ciel couvert</Muted></TwoLine>
      <TrayItem $ml={132}>
        <svg width="35" height="35" viewBox="0 0 35 35">
          <defs><linearGradient id="win" x1="0" y1="0" x2="1" y2="1"><stop stopColor="#4bcbfb" /><stop offset="1" stopColor="#0067c9" /></linearGradient></defs>
          <path fill="url(#win)" d="M0 0h17v17H0zM18 0h17v17H18zM0 18h17v17H0zM18 18h17v17H18z" />
        </svg>
      </TrayItem>
      <SearchBox>
        <svg width="23" height="24" viewBox="0 0 23 24" fill="none" stroke="#24262a" strokeWidth="2.500"><circle cx="10" cy="10" r="8.500" /><path d="m16 16.500 6 6" /></svg>
        <Grow>Search</Grow>
        <svg width="64" height="36" viewBox="0 0 64 36">
          <path fill="#dd9d41" d="M0 32Q4 27 6 22L12 6 20 2l6 5 6 1 8 6 4 8 8 6 4 5q-16 4-56 2Z" />
          <path fill="#f0bd6b" d="M12 6 20 2l2 8-3 10-8-1zM28 8l6 1-4 11-5-2z" />
          <path fill="#b06b35" d="M6 21q6-4 14 0l6 8q-14 4-24 1z" />
          <path fill="#eeb659" d="M1 31q14-4 26-1t24-2l4 6q-26 3-53 1z" />
          <path d="M24 24q-2-4-4-5M26 26q-1-8-2-12M27 26q2-7 5-9" stroke="#58b0ab" strokeWidth="2" fill="none" />
          <path d="M50 32 38 20M50 32 42 16M50 32l-3-19M50 32l3-20M50 32l7-17M50 32l12-12M50 32 36 26M50 32l13-6" stroke="#3f9a9b" strokeWidth="2.300" />
          <path fill="#d58a4e" d="M42 32h20q-2 3-10 3t-10-3Z" />
        </svg>
      </SearchBox>
      <AppSlot $ml={20}>
        <svg width="34" height="34" viewBox="0 0 34 34">
          <defs>
            <linearGradient id="cp1" x1="0" y1="0" x2=".2" y2="1"><stop stopColor="#21b5d4" /><stop offset=".5" stopColor="#4bc66f" /><stop offset="1" stopColor="#e8d22b" /></linearGradient>
            <linearGradient id="cp2" x1="0" y1="0" x2=".3" y2="1"><stop stopColor="#a35bf0" /><stop offset=".6" stopColor="#ea5ba8" /><stop offset="1" stopColor="#f5855c" /></linearGradient>
          </defs>
          <path fill="#2467dc" d="M12 1h10q3 0 4 4l2 6H15Z" />
          <path fill="url(#cp1)" d="M12 1h7q-3 1-4 5l-4 14q-1 3-4 3H4q-4 0-3-5L6 5q1-4 6-4Z" />
          <path fill="url(#cp2)" d="M20 8h9q5 0 3 6l-3 9q-1 5-6 5H13q3-1 4-6Z" />
          <rect x="7" y="23" width="27" height="11" rx="3" fill="#ffc20e" />
          <text x="20.500" y="32.500" textAnchor="middle" fontFamily="Open Sans" fontWeight="800" fontSize="10.500" fill="#1c1c1c">PRE</text>
        </svg>
      </AppSlot>
      <AppSlot $ml={30}>
        <svg width="36" height="34" viewBox="0 0 36 34">
          <rect x="0" y="9" width="27" height="25" rx="1.500" fill="#2b2b2c" />
          <rect x="9" y="0" width="27" height="24" rx="1.500" fill="#f5f5f6" />
          <path fill="#b1b2b3" d="M9 9h18v15H9z" />
        </svg>
      </AppSlot>
      <AppSlot $ml={30}>
        <svg width="36" height="34" viewBox="0 0 36 34">
          <path fill="#d99a06" d="M0 2q0-2 2-2h9l4 4-2 4H0Z" />
          <path fill="#fcc935" d="M0 6h11l3-3h20q2 0 2 2v27q0 2-2 2H2q-2 0-2-2Z" />
          <path fill="#137bd0" d="M5 34V26q0-4 4-4h17q4 0 4 4v8Z" />
          <path fill="#0b4f94" d="M10 27h15v2H10z" />
        </svg>
        <RunMark />
      </AppSlot>
      <AppSlot $ml={31}>
        <svg width="36" height="36" viewBox="0 0 36 36" fill="none" strokeWidth="6">
          <rect x="12" y="3" width="21" height="21" rx="2" stroke="#0f96d4" />
          <path d="M15 12H5Q3 12 3 14V31q0 2 2 2H22q2 0 2-2V14q0-2-2-2H20" stroke="#f38b00" />
          <path d="M12 12v10q0 2 2 2h6" stroke="#0f96d4" />
        </svg>
        <RunMark />
      </AppSlot>
      <AppSlot $ml={20} $active>
        <ChromeIcon />
        <RunMark $active />
      </AppSlot>
      <TrayItem $ml={161}>
        <svg width="16" height="10" viewBox="0 0 16 10" fill="none" stroke="#24262a" strokeWidth="2"><path d="m1 9 7-7.500L15 9" /></svg>
      </TrayItem>
      <TrayItem $ml={27}>
        <svg width="25" height="20" viewBox="0 0 25 20">
          <path d="M6 17.500a5 5 0 0 1-.5-10A7 7 0 0 1 19 7.500a5 5 0 0 1 0 10Z" fill="#b5b8bd" stroke="#2a2c30" strokeWidth="1.500" />
          <path d="m3 1 20 18.500" stroke="#24262a" strokeWidth="1.700" />
        </svg>
      </TrayItem>
      <TwoLine $w={60} $ml={15} $align="center">ENG<br />FR</TwoLine>
      <TrayItem $ml={15}>
        <svg width="25" height="20" viewBox="0 0 25 20" fill="none" stroke="#24262a" strokeWidth="1.900">
          <path d="M1 7.500q11.500-12 23 0M4.500 11q8-8 16 0M8 14.500q4.500-4.500 9 0" /><circle cx="12.500" cy="17.500" r="2" fill="#24262a" stroke="none" />
        </svg>
      </TrayItem>
      <TrayItem $ml={11}>
        <svg width="24" height="18" viewBox="0 0 24 18" fill="none" stroke="#24262a" strokeWidth="1.500">
          <path d="M1 6v6h4l6 5V1L5 6ZM15 6l7 7M22 6l-7 7" />
        </svg>
      </TrayItem>
      <TrayItem $ml={11}>
        <svg width="26" height="20" viewBox="0 0 26 20">
          <rect x="3" y="5" width="19" height="13" rx="3" fill="none" stroke="#24262a" strokeWidth="1.700" />
          <path fill="#24262a" d="M23 9h2.500v5H23zM5.500 9 11 7h9v9H5.500zM4 0 0 7h3l-1 5 5-7H4.500Z" />
        </svg>
      </TrayItem>
      <TwoLine $w={110} $ml={8} $align="right">23:36<br />28/04/2024</TwoLine>
      <TrayItem $ml={12}>
        <svg width="21" height="24" viewBox="0 0 21 24" fill="#323f4e">
          <path d="M10.500 0q7.500 0 7.500 8v5.500l3 5.500H0l3-5.500V8Q3 0 10.500 0ZM6.500 20.500h8q-1 3-4 3t-4-3Z" />
        </svg>
      </TrayItem>
    </Taskbar>
  );
}

export default function App() {
  return (
    <Screen>
      <GlobalStyle />
      <BrowserChrome />
      <HostClient />
      <WindowsTaskbar />
      <NewVmDialog />
    </Screen>
  );
}
